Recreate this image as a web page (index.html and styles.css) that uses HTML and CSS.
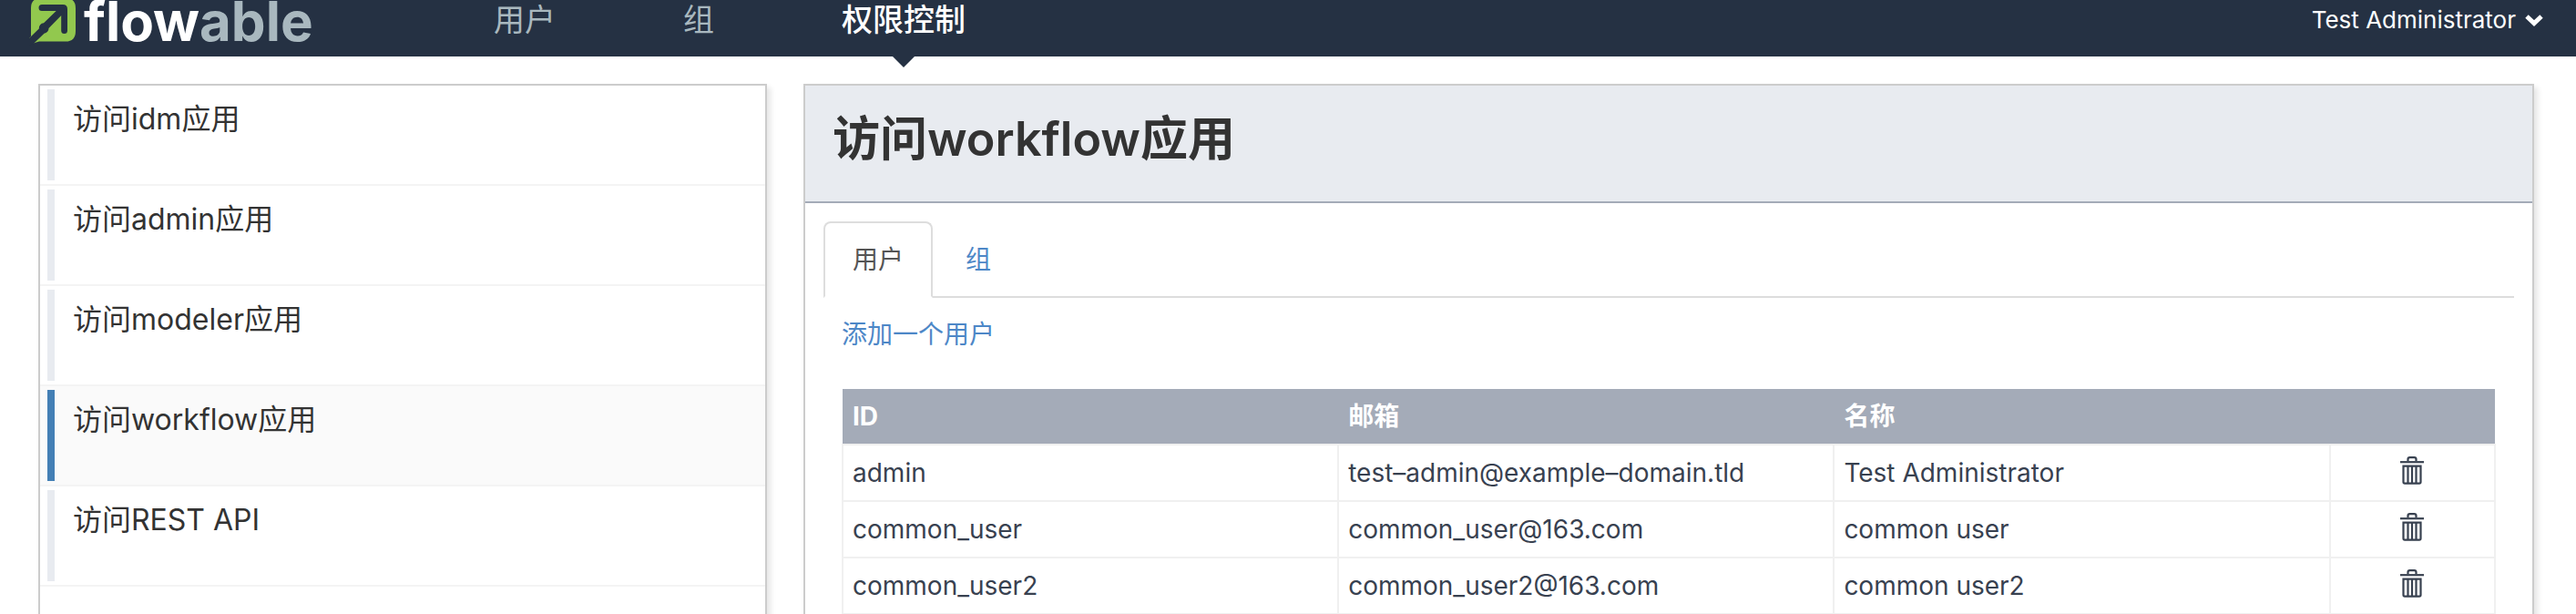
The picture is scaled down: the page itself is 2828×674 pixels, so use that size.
FILE: index.html
```html
<!DOCTYPE html>
<html lang="zh-CN">
<head>
<meta charset="utf-8">
<title>Flowable</title>
<link rel="stylesheet" href="styles.css">
</head>
<body>
<svg class="sprite" aria-hidden="true">
  <symbol id="trash" viewBox="0 0 26 31">
    <g fill="none" stroke="currentColor" stroke-width="2.200">
      <path d="M8.500 5V3Q8.500 1.200 10.500 1.200H15.500Q17.500 1.200 17.500 3V5"/>
      <path d="M0 6.200H26"/>
      <path d="M3.500 10.700H22.500V28Q22.500 29.700 21 29.700H5Q3.500 29.700 3.500 28Z"/>
      <path d="M8.500 10.500V29M13 10.500V29M17.500 10.500V29"/>
    </g>
  </symbol>
</svg>
<header class="navbar">
  <a class="logo" href="#">
    <svg class="logo-mark" viewBox="0 0 52 50" aria-hidden="true">
      <path fill="#92c84e" d="M0.300 41.700L2 40V9Q2 -2 13 -2H40Q51 -2 51 9V34Q51 45.600 40 45.600H11L5.300 47.300L1 46Z"/>
      <g fill="#253143">
        <path d="M14 5H37Q42 5 42 10V33.500Q42 37 38.600 37Q35.200 37 35.200 33.500V17L21.500 31A5.700 5.700 0 0 1 16.500 36.800L5.300 47.500L0 50V42L10.800 31.500A5.700 5.700 0 0 1 16 25.300L29.700 12H14Q10.500 12 10.500 8.500Q10.500 5 14 5Z"/>
      </g>
    </svg>
    <span class="logo-text">flow<span class="logo-tail">able</span></span>
  </a>
  <nav class="menu">
    <a class="menu-item" href="#">用户</a>
    <a class="menu-item" href="#">组</a>
    <a class="menu-item active" href="#">权限控制</a>
  </nav>
  <button class="account" type="button">Test Administrator
    <svg class="chevron" viewBox="0 0 20 14" aria-hidden="true"><path d="M2 3L10 10.500L18 3" fill="none" stroke="currentColor" stroke-width="5"/></svg>
  </button>
</header>
<main class="layout">
  <ul class="panel privileges">
    <li class="privilege"><a href="#">访问idm应用</a></li>
    <li class="privilege"><a href="#">访问admin应用</a></li>
    <li class="privilege"><a href="#">访问modeler应用</a></li>
    <li class="privilege selected"><a href="#">访问workflow应用</a></li>
    <li class="privilege"><a href="#">访问REST API</a></li>
  </ul>
  <section class="panel detail">
    <h2 class="title">访问workflow应用</h2>
    <div class="tabs">
      <a class="tab active" href="#">用户</a>
      <a class="tab" href="#">组</a>
    </div>
    <div class="content">
      <a class="add" href="#">添加一个用户</a>
      <table class="users">
        <thead><tr><th class="wide">ID</th><th class="wide">邮箱</th><th class="wide">名称</th><th></th></tr></thead>
        <tbody>
          <tr><td>admin</td><td>test–admin@example–domain.tld</td><td>Test Administrator</td><td><button class="remove" type="button" aria-label="删除"><svg><use href="#trash"/></svg></button></td></tr>
          <tr><td>common_user</td><td>common_user@163.com</td><td>common user</td><td><button class="remove" type="button" aria-label="删除"><svg><use href="#trash"/></svg></button></td></tr>
          <tr><td>common_user2</td><td>common_user2@163.com</td><td>common user2</td><td><button class="remove" type="button" aria-label="删除"><svg><use href="#trash"/></svg></button></td></tr>
        </tbody>
      </table>
    </div>
  </section>
</main>
</body>
</html>
```
FILE: styles.css
```css
* { box-sizing: border-box; }
html, body { height: 100%; }
body {
  margin: 0;
  display: flex;
  flex-direction: column;
  overflow: hidden;
  background: #fff;
  color: #333;
  font: 28px/40px Inter, "Noto Sans CJK SC", sans-serif;
}
a { color: #4d87c7; text-decoration: none; }
button { border: 0; padding: 0; background: none; color: inherit; font: inherit; }
.sprite { display: none; }

.navbar {
  flex: none;
  display: flex;
  height: 62px;
  padding: 0 36px 0 32px;
  background: #253143;
}
.logo { display: flex; width: 440px; }
.logo-mark { width: 52px; height: 50px; margin-right: 8px; }
.logo-text { color: #fff; font-size: 60px; line-height: 46px; font-weight: 700; }
.logo-tail { color: #a9b8bf; }
.menu { display: flex; flex: 1; }
.menu-item { position: relative; padding: 0 70px; color: #a9b8bf; font-size: 34px; line-height: 44px; }
.menu-item.active { color: #fff; font-weight: 500; }
.menu-item.active::after {
  content: "";
  position: absolute;
  top: 62px;
  left: 50%;
  margin-left: -12px;
  border: 12px solid transparent;
  border-top-color: #253143;
  border-bottom: 0;
}
.account { display: flex; align-items: center; gap: 10px; height: 44px; color: #fff; font-size: 26px; }
.chevron { width: 20px; height: 14px; }

.layout {
  flex: 1;
  display: grid;
  grid-template-columns: minmax(0, 8fr) minmax(0, 19fr);
  gap: 40px;
  padding: 30px 46px 0 42px;
  min-height: 0;
}
.panel { border: 2px solid #ccc; border-bottom: 0; box-shadow: 4px 4px 6px rgba(0, 0, 0, .1); }
.privileges { margin: 0; padding: 0; list-style: none; }
.privilege { display: flex; height: 110px; padding: 4px 8px; border-bottom: 2px solid #f4f4f4; }
.privilege a { flex: 1; padding: 13px 20px; border-left: 8px solid #e8ebf0; color: #333; font-size: 32px; }
.selected { background: #fafafa; }
.selected a { border-left-color: #437fb5; }

.title {
  margin: 0;
  padding: 24px 30px 33px;
  border-bottom: 2px solid #a4abb8;
  background: #e8ebf0;
  font-size: 52px;
  line-height: 70px;
  font-weight: 600;
}
.tabs { display: flex; gap: 4px; margin: 20px 20px 0; border-bottom: 2px solid #ddd; }
.tab { margin-bottom: -2px; padding: 20px 30px; border: 2px solid transparent; border-radius: 8px 8px 0 0; }
.tab.active { border-color: #ddd; border-bottom-color: #fff; color: #555; }
.content { padding: 20px 40px; }
.add { display: block; margin-bottom: 40px; }
.users { width: 100%; table-layout: fixed; border-collapse: collapse; color: #384150; }
.wide { width: 30%; }
.users th { height: 61px; padding: 0 11px; background: #a4abb8; color: #fff; text-align: left; font-weight: 700; }
.users td { height: 62px; padding: 0 10px; border: 2px solid #f0f0f0; }
.remove { display: flex; margin: 0 auto; padding-bottom: 6px; }
.remove svg { width: 26px; height: 31px; }
```
